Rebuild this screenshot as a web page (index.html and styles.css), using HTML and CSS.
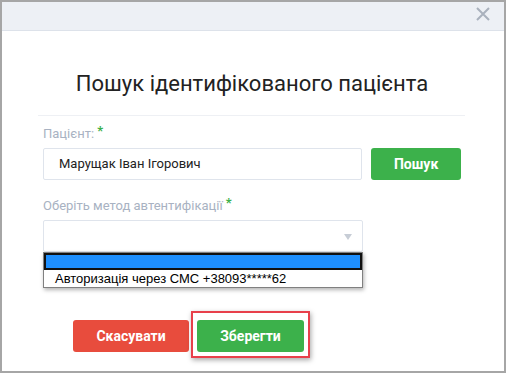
FILE: index.html
```html
<!DOCTYPE html>
<html lang="uk">
<head>
  <meta charset="UTF-8">
  <meta name="viewport" content="width=device-width, initial-scale=1.0">
  <title>Пошук пацієнта</title>
  <link rel="stylesheet" href="styles.css">
</head>
<body>
  <div class="modal">
    <div class="modal-header">
      <button class="close" aria-label="Закрити">
        <svg width="14" height="14" viewBox="0 0 14 14">
          <path d="M1 1 L13 13 M13 1 L1 13" stroke="#a9b1bd" stroke-width="2" fill="none"/>
        </svg>
      </button>
    </div>

    <div class="modal-body">
      <h3 class="title">Пошук ідентифікованого пацієнта</h3>
      <div class="divider"></div>

      <div class="field">
        <label class="label">Пацієнт: <span class="req">*</span></label>
        <div class="row">
          <div class="input">Марущак Іван Ігорович</div>
          <button class="btn btn-green btn-search">Пошук</button>
        </div>
      </div>

      <div class="field field-method">
        <label class="label">Оберіть метод автентифікації <span class="req">*</span></label>
        <div class="select-wrap">
          <div class="select"><span class="arrow"></span></div>
          <div class="dropdown">
            <div class="option option-active"></div>
            <div class="option">Авторизація через СМС +38093*****62</div>
          </div>
        </div>
      </div>

      <div class="actions">
        <button class="btn btn-red btn-cancel">Скасувати</button>
        <span class="highlight">
          <button class="btn btn-green btn-save">Зберегти</button>
        </span>
      </div>
    </div>
  </div>
</body>
</html>
```

FILE: styles.css
```css
* {
  box-sizing: border-box;
}

body {
  margin: 0;
  padding: 0;
  font-family: Roboto, "Liberation Sans", Arial, sans-serif;
  background: #fff;
}

.modal {
  width: 506px;
  height: 373px;
  border: 2px solid #a6a6a6;
  background: #fff;
  overflow: hidden;
}

.modal-header {
  height: 29px;
  background: #edf0f5;
  border-bottom: 1px solid #dde2ea;
  display: flex;
  justify-content: flex-end;
  align-items: flex-start;
  padding: 5px 14px 0 0;
}

.close {
  border: 0;
  background: none;
  padding: 0;
  width: 14px;
  height: 14px;
  display: block;
}

.close svg {
  display: block;
}

.modal-body {
  padding: 0 43px 0 41px;
}

.title {
  margin: 40px 0 0;
  font-size: 22px;
  line-height: 26px;
  font-weight: 400;
  color: #222;
  text-align: center;
}

.divider {
  height: 1px;
  background: #eef0f4;
  margin: 18px -4px 0 -5px;
}

.field {
  margin-top: 10px;
}

.field-method {
  margin-top: 18px;
}

.label {
  display: block;
  font-size: 13px;
  line-height: 16px;
  color: #a8b2c2;
  margin-bottom: 6px;
}

.req {
  color: #3cb04a;
  font-weight: 700;
  position: relative;
  top: -3px;
}

.row {
  display: flex;
  gap: 9px;
}

.input {
  width: 320px;
  height: 32px;
  border: 1px solid #dfe4ec;
  border-radius: 2px;
  padding: 0 15px;
  font-size: 13px;
  line-height: 30px;
  color: #222;
}

.btn {
  border: 0;
  border-radius: 3px;
  height: 32px;
  font-family: Roboto, "Liberation Sans", Arial, sans-serif;
  font-size: 14px;
  font-weight: 700;
  color: #fff;
  padding: 0;
}

.btn-green {
  background: #3cb14b;
}

.btn-red {
  background: #e84c3d;
}

.btn-search {
  width: 90px;
}

.select-wrap {
  position: relative;
  width: 320px;
}

.select {
  height: 32px;
  border: 1px solid #dfe4ec;
  border-radius: 2px;
  position: relative;
}

.arrow {
  position: absolute;
  right: 10px;
  top: 13px;
  border-left: 4px solid transparent;
  border-right: 4px solid transparent;
  border-top: 6px solid #c7cdd6;
}

.dropdown {
  position: absolute;
  top: 100%;
  left: 0;
  width: 320px;
  background: #fff;
  border: 1px solid #808080;
  box-shadow: 1px 2px 4px rgba(0, 0, 0, 0.3);
  font-family: "Liberation Sans", Arial, sans-serif;
  font-size: 13px;
  color: #000;
}

.option {
  height: 17px;
  line-height: 17px;
  padding-left: 11px;
}

.option-active {
  background: #1e8fff;
  border: 2px solid #111;
}

.actions {
  display: flex;
  align-items: flex-start;
  margin-top: 68px;
  padding-left: 30px;
}

.btn-cancel {
  width: 116px;
}

.highlight {
  display: block;
  margin: -9px 0 0 2px;
  padding: 7px 4px 4px;
  border: 2px solid #e8404b;
  box-shadow: 1px 2px 5px rgba(0, 0, 0, 0.35);
}

.btn-save {
  display: block;
  width: 107px;
}
```
